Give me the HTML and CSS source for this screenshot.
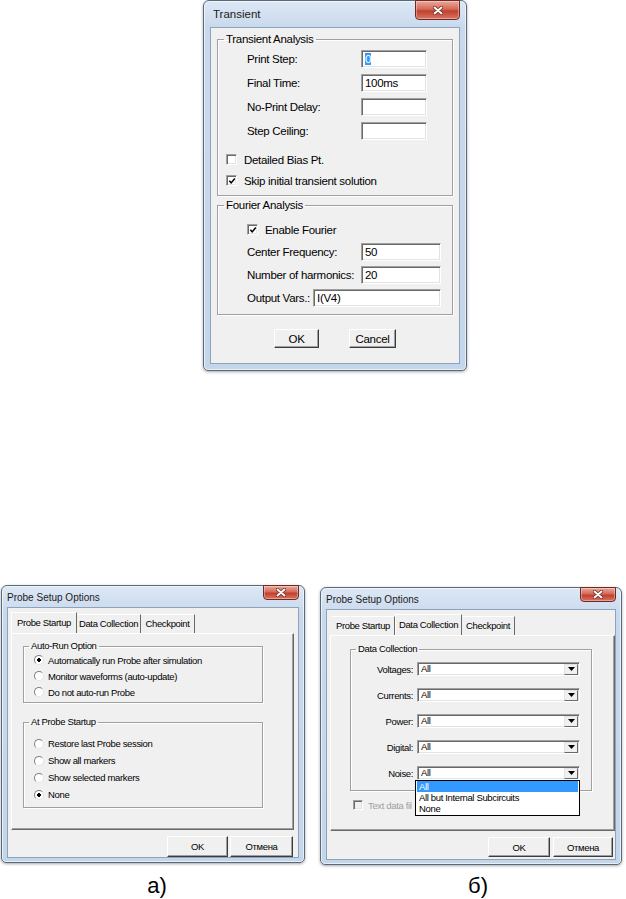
FILE: index.html
```html
<!DOCTYPE html>
<html lang="ru">
<head>
    <meta charset="UTF-8">
    <meta name="viewport" content="width=device-width, initial-scale=1.0">
    <title>Transient / Probe Setup Options</title>
    <link rel="stylesheet" href="styles.css">
</head>
<body>
    <!-- Transient analysis setup dialog -->
    <div class="window transient">
        <div class="titlebar">
            <span class="title">Transient</span>
            <span class="close"><svg class="close-x" viewBox="0 0 10 9"><path class="x-shade" d="M1.5 1.5 8.5 7.5M8.5 1.5 1.5 7.5"/><path class="x-mark" d="M1.5 1.5 8.5 7.5M8.5 1.5 1.5 7.5"/></svg></span>
        </div>
        <div class="client">
            <fieldset class="group tran-analysis">
                <legend>Transient Analysis</legend>
                <div class="field"><span class="label">Print Step:</span><span class="edit"><span class="selected">0</span></span></div>
                <div class="field"><span class="label">Final Time:</span><span class="edit">100ms</span></div>
                <div class="field"><span class="label">No-Print Delay:</span><span class="edit"></span></div>
                <div class="field"><span class="label">Step Ceiling:</span><span class="edit"></span></div>
                <div class="check"><span class="box"></span>Detailed Bias Pt.</div>
                <div class="check"><span class="box"><svg class="tick" viewBox="0 0 9 9"><path d="M1.5 4.2 3.6 6.6 7.6 1.8"/></svg></span>Skip initial transient solution</div>
            </fieldset>
            <fieldset class="group fourier">
                <legend>Fourier Analysis</legend>
                <div class="check"><span class="box"><svg class="tick" viewBox="0 0 9 9"><path d="M1.5 4.2 3.6 6.6 7.6 1.8"/></svg></span>Enable Fourier</div>
                <div class="field"><span class="label">Center Frequency:</span><span class="edit">50</span></div>
                <div class="field"><span class="label">Number of harmonics:</span><span class="edit">20</span></div>
                <div class="field"><span class="label short">Output Vars.:</span><span class="edit wide">I(V4)</span></div>
            </fieldset>
            <div class="buttons">
                <span class="btn ok">OK</span>
                <span class="btn cancel">Cancel</span>
            </div>
        </div>
    </div>

    <div class="figures">
        <!-- а) Probe Startup tab -->
        <figure class="figure fig-a">
            <div class="window probe probe-a">
                <div class="titlebar">
                    <span class="title">Probe Setup Options</span>
                    <span class="close"><svg class="close-x" viewBox="0 0 10 9"><path class="x-shade" d="M1.5 1.5 8.5 7.5M8.5 1.5 1.5 7.5"/><path class="x-mark" d="M1.5 1.5 8.5 7.5M8.5 1.5 1.5 7.5"/></svg></span>
                </div>
                <div class="client">
                    <div class="tabs">
                        <span class="tab active">Probe Startup</span>
                        <span class="tab">Data Collection</span>
                        <span class="tab">Checkpoint</span>
                    </div>
                    <div class="panel">
                        <fieldset class="group autorun">
                            <legend>Auto-Run Option</legend>
                            <div class="radio on"><span class="dot"></span>Automatically run Probe after simulation</div>
                            <div class="radio"><span class="dot"></span>Monitor waveforms (auto-update)</div>
                            <div class="radio"><span class="dot"></span>Do not auto-run Probe</div>
                        </fieldset>
                        <fieldset class="group startup">
                            <legend>At Probe Startup</legend>
                            <div class="radio"><span class="dot"></span>Restore last Probe session</div>
                            <div class="radio"><span class="dot"></span>Show all markers</div>
                            <div class="radio"><span class="dot"></span>Show selected markers</div>
                            <div class="radio on"><span class="dot"></span>None</div>
                        </fieldset>
                    </div>
                    <div class="buttons">
                        <span class="btn ok">OK</span>
                        <span class="btn cancel">Отмена</span>
                    </div>
                </div>
            </div>
            <figcaption>а)</figcaption>
        </figure>

        <!-- б) Data Collection tab with the Noise list dropped down -->
        <figure class="figure fig-b">
            <div class="window probe probe-b">
                <div class="titlebar">
                    <span class="title">Probe Setup Options</span>
                    <span class="close"><svg class="close-x" viewBox="0 0 10 9"><path class="x-shade" d="M1.5 1.5 8.5 7.5M8.5 1.5 1.5 7.5"/><path class="x-mark" d="M1.5 1.5 8.5 7.5M8.5 1.5 1.5 7.5"/></svg></span>
                </div>
                <div class="client">
                    <div class="tabs">
                        <span class="tab">Probe Startup</span>
                        <span class="tab active">Data Collection</span>
                        <span class="tab">Checkpoint</span>
                    </div>
                    <div class="panel">
                        <fieldset class="group collection">
                            <legend>Data Collection</legend>
                            <div class="combo-row"><span class="label">Voltages:</span><span class="combo"><span class="value">All</span><span class="arrow"><svg viewBox="0 0 7 4"><path d="M0 0h7L3.5 4z"/></svg></span></span></div>
                            <div class="combo-row"><span class="label">Currents:</span><span class="combo"><span class="value">All</span><span class="arrow"><svg viewBox="0 0 7 4"><path d="M0 0h7L3.5 4z"/></svg></span></span></div>
                            <div class="combo-row"><span class="label">Power:</span><span class="combo"><span class="value">All</span><span class="arrow"><svg viewBox="0 0 7 4"><path d="M0 0h7L3.5 4z"/></svg></span></span></div>
                            <div class="combo-row"><span class="label">Digital:</span><span class="combo"><span class="value">All</span><span class="arrow"><svg viewBox="0 0 7 4"><path d="M0 0h7L3.5 4z"/></svg></span></span></div>
                            <div class="combo-row"><span class="label">Noise:</span><span class="combo open"><span class="value">All</span><span class="arrow"><svg viewBox="0 0 7 4"><path d="M0 0h7L3.5 4z"/></svg></span>
                                <span class="list">
                                    <span class="item current">All</span>
                                    <span class="item">All but Internal Subcircuits</span>
                                    <span class="item">None</span>
                                </span>
                            </span></div>
                        </fieldset>
                        <div class="check disabled"><span class="box"></span><span class="hidden-under">Text data file format (CSDF)</span></div>
                    </div>
                    <div class="buttons">
                        <span class="btn ok">OK</span>
                        <span class="btn cancel">Отмена</span>
                    </div>
                </div>
            </div>
            <figcaption>б)</figcaption>
        </figure>
    </div>
</body>
</html>
```

FILE: styles.css
```css
* {
    box-sizing: border-box;
}
body {
    margin: 0;
    background-color: #fff;
    font-family: "Liberation Sans", Arial, sans-serif;
    color: #000;
}

/* window chrome (Windows 7 basic) */
.window {
    display: flex;
    flex-direction: column;
    border: 1px solid #5b6a7b;
    border-radius: 6px 6px 5px 5px;
    background: linear-gradient(#dde8f5, #c9d9ed 26px, #c4d6eb);
    padding: 0 6px 6px;
    box-shadow: 0 1px 3px rgba(0, 0, 0, 0.35), inset 0 0 0 1px rgba(255, 255, 255, 0.6);
}
.titlebar {
    display: flex;
    justify-content: space-between;
    align-items: flex-start;
    flex: none;
}
.title {
    color: #1b1b1b;
    letter-spacing: 0;
    white-space: nowrap;
}
.close {
    display: flex;
    align-items: center;
    justify-content: center;
    margin-top: -1px;
    border: 1px solid #71291f;
    border-radius: 0 0 4px 4px;
    background: linear-gradient(#eaa99c, #d46a59 45%, #c0402d 55%, #d97463);
    box-shadow: inset 0 0 0 1px rgba(255, 255, 255, 0.35);
}
.close-x {
    width: 10px;
    height: 9px;
}
.close-x path {
    fill: none;
    stroke-linecap: round;
}
.x-shade {
    stroke: #6a2a22;
    stroke-width: 3.4;
}
.x-mark {
    stroke: #fff;
    stroke-width: 1.9;
}
.client {
    flex: 1;
    display: flex;
    flex-direction: column;
    background-color: #f0f0f0;
    border: 1px solid #8ea2b9;
}

/* shared controls */
.group {
    margin: 0;
    padding: 0;
    min-width: 0;
    border: 1px solid #a0a0a0;
    box-shadow: 1px 1px 0 #fff, inset 1px 1px 0 #fff;
}
.group legend {
    padding: 0 2px;
    white-space: nowrap;
}
.field {
    display: flex;
    align-items: center;
    height: 18px;
    margin-left: 29px;
    white-space: nowrap;
}
.edit {
    display: block;
    height: 18px;
    background-color: #fff;
    border: 1px solid;
    border-color: #a0a0a0 #fff #fff #a0a0a0;
    box-shadow: inset 1px 1px 0 #696969, inset -1px -1px 0 #e3e3e3;
    padding: 1px 3px 0;
    line-height: 15px;
    white-space: nowrap;
}
.selected {
    background-color: #3399ff;
    color: #fff;
}
.check {
    display: flex;
    align-items: center;
    white-space: nowrap;
}
.box {
    display: flex;
    align-items: center;
    justify-content: center;
    flex: none;
    background-color: #fff;
    border: 1px solid;
    border-color: #a0a0a0 #fff #fff #a0a0a0;
    box-shadow: inset 1px 1px 0 #696969, inset -1px -1px 0 #e3e3e3;
}
.tick {
    width: 8px;
    height: 8px;
}
.tick path {
    fill: none;
    stroke: #000;
    stroke-width: 1.7;
}
.buttons {
    display: flex;
    flex: none;
}
.btn {
    display: flex;
    align-items: center;
    justify-content: center;
    background-color: #f0f0f0;
    border: 1px solid;
    border-color: #fff #3c3c3c #3c3c3c #fff;
    box-shadow: inset -1px -1px 0 #a0a0a0;
}

/* Transient */
.transient {
    width: 264px;
    height: 371px;
    margin-left: 203px;
    font-size: 11.5px;
    letter-spacing: -0.3px;
}
.transient .titlebar {
    height: 26px;
}
.transient .title {
    font-size: 11.5px;
    line-height: 27px;
    padding-left: 3px;
}
.transient .close {
    width: 45px;
    height: 20px;
}
.transient .group {
    margin: 0 6px;
}
.transient legend {
    margin-left: 6px;
    line-height: 14px;
}
.transient .label {
    width: 114px;
}
.transient .edit {
    width: 66px;
}
.transient .check {
    height: 21px;
    gap: 7px;
}
.transient .box {
    width: 11px;
    height: 11px;
}
.tran-analysis {
    margin-top: 4px !important;
    padding-bottom: 4px !important;
}
.tran-analysis .field {
    margin-top: 6px;
}
.tran-analysis legend + .field {
    margin-top: 4px;
}
.tran-analysis .check {
    margin-left: 8px;
}
.tran-analysis .field + .check {
    margin-top: 9px;
}
.fourier {
    margin-top: 2px !important;
    padding-bottom: 7px !important;
}
.fourier .check {
    margin: 7px 0 0 29px;
}
.fourier .field {
    margin-top: 5px;
}
.fourier .check + .field {
    margin-top: 3px;
}
.fourier .edit {
    width: 80px;
}
.fourier .label.short {
    width: 66px;
}
.fourier .edit.wide {
    width: 128px;
}
.transient .buttons {
    justify-content: center;
    gap: 30px;
    margin-top: 14px;
}
.transient .btn {
    height: 19px;
}
.transient .ok {
    width: 45px;
}
.transient .cancel {
    width: 47px;
}

/* Probe Setup Options */
.figures {
    display: flex;
    align-items: flex-start;
    margin-top: 214px;
}
.figure {
    margin: 0;
}
.fig-a {
    margin-left: 1px;
}
.fig-b {
    margin: 2px 0 0 15px;
}
.probe {
    height: 278px;
    padding: 0 5px 4px;
    font-size: 9.5px;
    letter-spacing: -0.35px;
}
.probe-a {
    width: 304px;
}
.probe-b {
    width: 302px;
}
.probe .titlebar {
    height: 21px;
}
.probe .title {
    font-size: 10px;
    line-height: 19px;
    padding-top: 2px;
}
.probe .close {
    width: 36px;
    height: 15px;
}
.tabs {
    display: flex;
    height: 19px;
    margin-top: 6px;
    flex: none;
}
.tab {
    height: 19px;
    line-height: 18px;
    text-align: center;
    white-space: nowrap;
    border-top: 1px solid #fff;
    border-right: 1px solid #696969;
}
.tab.active {
    position: relative;
    z-index: 1;
    height: 21px;
    margin-top: -2px;
    line-height: 19px;
    border-left: 1px solid #fff;
    background-color: #f0f0f0;
}
.probe-a .tabs {
    margin-left: 3px;
}
.probe-a .tab:nth-child(1) { width: 66px; }
.probe-a .tab:nth-child(2) { width: 64px; }
.probe-a .tab:nth-child(3) { width: 54px; }
.probe-b .tabs {
    margin-left: 5px;
}
.probe-b .tab:nth-child(1) { width: 63px; }
.probe-b .tab:nth-child(2) { width: 67px; }
.probe-b .tab:nth-child(3) { width: 53px; }
.panel {
    flex: none;
    height: 197px;
    border: 1px solid;
    border-color: #fff #696969 #696969 #fff;
    box-shadow: inset -1px -1px 0 #a0a0a0;
}
.probe-a .panel {
    margin: 0 4px 0 3px;
}
.probe-b .panel {
    height: 196px;
    margin-left: 3px;
}
.probe legend {
    margin-left: 5px;
    line-height: 12px;
}
.probe .buttons {
    justify-content: flex-end;
    margin-top: 6px;
}
.probe-a .buttons {
    gap: 2px;
    padding-right: 5px;
}
.probe-a .btn {
    height: 21px;
}
.probe-a .ok {
    width: 61px;
}
.probe-a .cancel {
    width: 63px;
}
.probe-b .buttons {
    gap: 3px;
    padding-right: 2px;
}
.probe-b .btn {
    height: 20px;
}
.probe-b .ok {
    width: 62px;
}
.probe-b .cancel {
    width: 60px;
}

.autorun,
.startup {
    width: 240px;
    margin-left: 11px !important;
}
.autorun {
    margin-top: 6px !important;
    padding-bottom: 2px !important;
}
.startup {
    margin-top: 13px !important;
    padding: 7px 0 4px !important;
}
.radio {
    display: flex;
    align-items: center;
    gap: 4px;
    height: 16px;
    margin-left: 10px;
    white-space: nowrap;
}
.startup .radio {
    height: 17px;
}
.dot {
    width: 10px;
    height: 10px;
    border-radius: 50%;
    border: 1px solid;
    border-color: #808080 #e3e3e3 #e3e3e3 #808080;
    background-color: #fff;
}
.radio.on .dot {
    background: radial-gradient(circle, #000 1.6px, #fff 2.1px);
}

.collection {
    width: 242px;
    margin: 7px 0 0 19px !important;
    padding-bottom: 10px !important;
}
.combo-row {
    display: flex;
    align-items: center;
    gap: 4px;
    height: 14px;
    margin-top: 12px;
    white-space: nowrap;
}
.collection legend + .combo-row {
    margin-top: 7px;
}
.combo-row .label {
    width: 62px;
    text-align: right;
}
.combo {
    position: relative;
    display: flex;
    align-items: center;
    width: 163px;
    height: 14px;
    background-color: #fff;
    border: 1px solid;
    border-color: #a0a0a0 #fff #fff #a0a0a0;
    box-shadow: inset 1px 1px 0 #696969, inset -1px -1px 0 #e3e3e3;
}
.combo .value {
    flex: 1;
    padding-left: 3px;
    line-height: 12px;
}
.combo .arrow {
    display: flex;
    align-items: center;
    justify-content: center;
    width: 14px;
    height: 11px;
    margin-right: 1px;
    background-color: #f0f0f0;
    border: 1px solid;
    border-color: #e3e3e3 #696969 #696969 #e3e3e3;
}
.combo .arrow svg {
    width: 7px;
    height: 4px;
}
.list {
    position: absolute;
    z-index: 2;
    top: 13px;
    left: -3px;
    width: 165px;
    display: flex;
    flex-direction: column;
    padding: 0 1px 1px;
    background-color: #fff;
    border: 1px solid #000;
}
.item {
    height: 11px;
    line-height: 11px;
    padding-left: 2px;
    white-space: nowrap;
}
.item.current {
    background-color: #3399ff;
    color: #fff;
}
.check.disabled {
    height: 12px;
    gap: 5px;
    margin: 8px 0 0 22px;
    color: #a0a0a0;
}
.check.disabled .box {
    width: 10px;
    height: 10px;
    background-color: #f0f0f0;
}
/* the open list covers the rest of this label */
.hidden-under {
    width: 44px;
    overflow: hidden;
}

figcaption {
    margin-top: 9px;
    font-size: 22px;
    line-height: 28px;
    text-align: center;
}
.fig-a figcaption {
    padding-left: 8px;
}
.fig-b figcaption {
    margin-top: 7px;
    padding-left: 14px;
}
```
